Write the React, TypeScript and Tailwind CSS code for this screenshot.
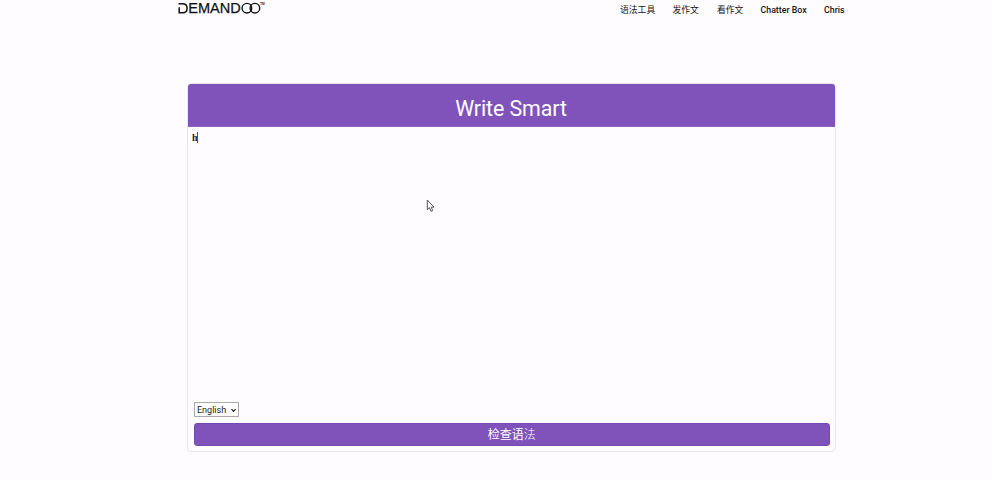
import { useState } from "react";

function Logo() {
  return (
    <svg width="88" height="16" viewBox="0 0 88 16" role="img" aria-label="DEMANDOO" fill="none" stroke="#111" className="block">
      <path d="M1.5 3.8H5.6C8.7 3.8 10.1 5.5 10.1 8.2S8.7 12.8 5.6 12.8H2.2V7.2" strokeWidth="1.5" />
      <text x="11.2" y="13.4" fill="#111" stroke="#111" strokeWidth="0.25" fontSize="14.6" textLength="52.5" lengthAdjust="spacingAndGlyphs" fontFamily="Liberation Sans, sans-serif">EMAND</text>
      <circle cx="69.9" cy="8.2" r="4.8" strokeWidth="1.4" />
      <circle cx="77.9" cy="8.2" r="4.8" strokeWidth="1.4" />
      <text x="83" y="4.6" fill="#222" stroke="none" fontSize="3.2" fontWeight="bold" fontFamily="Liberation Sans, sans-serif">TM</text>
    </svg>
  );
}

const links = [
  { label: "语法工具", style: "w-[35px] font-normal" },
  { label: "发作文", style: "w-[27px] font-normal" },
  { label: "看作文", style: "w-[26px] font-normal" },
  { label: "Chatter Box", style: "w-[46px] font-medium" },
  { label: "Chris", style: "w-[20px] font-medium" },
];

export default function App() {
  const [text, setText] = useState("h");
  return (
    <div className="relative h-[480px] w-[992px] overflow-hidden bg-[#fefcff] font-['Roboto','Noto_Sans_CJK_SC',sans-serif]">
      <header className="flex h-[83px] items-start justify-between pr-[148px] pl-[177px]">
        <Logo />
        <nav className="flex gap-[17.5px] pt-[4px] text-[8.8px] leading-[13px] text-[#151515]">
          {links.map((link) => (
            <a key={link.label} className={`${link.style} whitespace-nowrap`}>
              {link.label}
            </a>
          ))}
        </nav>
      </header>
      <main className="ml-[187px] flex h-[369px] w-[649px] flex-col overflow-hidden rounded-[4px] border border-[#e8e6ec]">
        <h1 className="-mt-px flex h-[44px] shrink-0 items-center justify-center border-t border-b border-t-[#7648b4] border-b-[#8c62c2] bg-[#7f53b9] pt-[8px] pr-px text-[21.4px] leading-none tracking-[-0.1px] text-white">
          Write Smart
        </h1>
        <div className="flex flex-1 items-start px-[4px] pt-[5px] font-['Liberation_Serif',serif] text-[10px] leading-[11px] font-bold text-[#222]">
          <span contentEditable suppressContentEditableWarning onBlur={(e) => setText(e.currentTarget.textContent ?? "")} className="outline-none">
            {text}
          </span>
          <span className="-ml-[0.5px] h-[11px] w-px bg-[#555]" />
        </div>
        <div className="px-[6px] pr-[5.5px] pb-[5.5px]">
          <button className="flex h-[15px] w-[45px] items-center justify-between border border-[#aaa9ad] bg-white pt-px pr-[2px] pl-[2px] text-[9px] leading-none text-[#222]">
            English
            <svg width="5" height="5" viewBox="0 0 5 5" fill="none" stroke="#222" strokeWidth="1.2">
              <path d="M.5 1.2 2.5 3.4 4.5 1.2" />
            </svg>
          </button>
          <button className="mt-[5.5px] flex h-[23px] w-full items-center justify-center rounded-[3px] border border-[#7648b4] bg-[#7f53b9] pt-px text-[12px] leading-none font-normal text-white">
            <span>检查语</span>
            <span className="font-light">法</span>
          </button>
        </div>
      </main>
      <svg className="absolute top-[199px] left-[426px]" width="10" height="14" viewBox="0 0 10 14" fill="white" stroke="#444" strokeWidth="0.9">
        <path d="M1.3 1V10.7L3.5 8.7 5 12.3 6.7 11.6 5.2 8.2H8Z" />
      </svg>
    </div>
  );
}
